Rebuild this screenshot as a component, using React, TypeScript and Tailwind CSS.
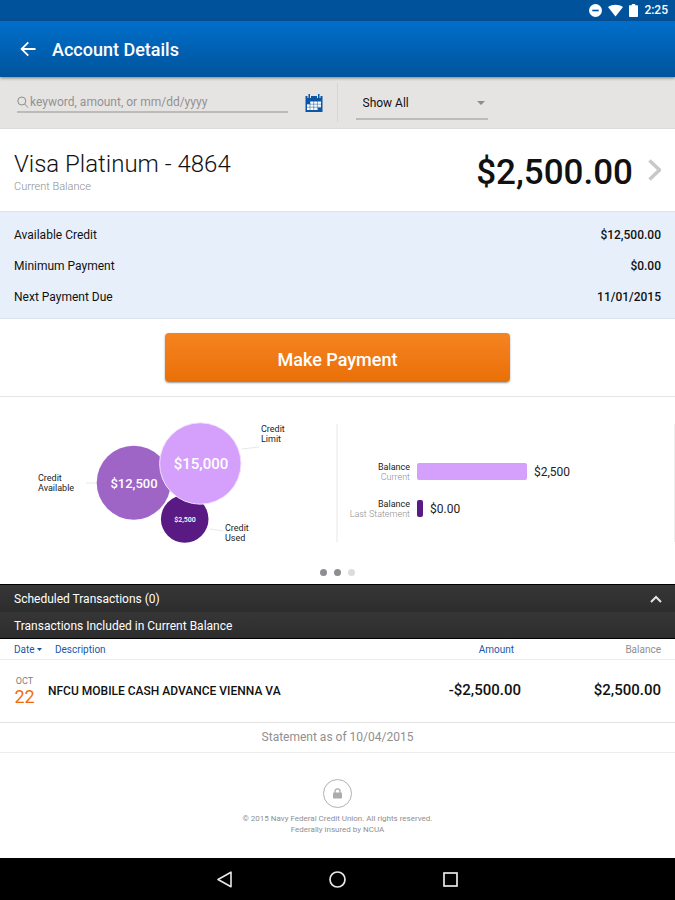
import type { ReactNode } from 'react';

const details = [
  { label: 'Available Credit', value: '$12,500.00' },
  { label: 'Minimum Payment', value: '$0.00' },
  { label: 'Next Payment Due', value: '11/01/2015' },
];

function StatusBar() {
  return (
    <div className="flex h-[21px] items-center justify-end bg-[#00529b] pr-[7px] text-white">
      <svg className="mr-[6px] h-[13px] w-[13px]" viewBox="0 0 13 13">
        <circle cx="6.5" cy="6.5" r="6.5" fill="#fff" />
        <rect x="3.3" y="5.7" width="6.4" height="1.6" fill="#00529b" />
      </svg>
      <svg className="mr-[6px] h-[13px] w-[15px]" viewBox="0 0 15 13">
        <path d="M0 3C4.500 0 10.500 0 15 3L7.500 12.500Z" fill="#fff" />
      </svg>
      <svg className="mr-[6px] h-[13px] w-[9px]" viewBox="0 0 9 13">
        <path d="M2.800 0h3.400v1.300H8.200Q9 1.300 9 2.100V12.200Q9 13 8.200 13H.8Q0 13 0 12.200V2.100Q0 1.300.8 1.300h2z" fill="#fff" />
      </svg>
      <span className="text-[12px] leading-[21px] font-medium">2:25</span>
    </div>
  );
}

function Header() {
  return (
    <header className="relative z-10 flex h-[56px] items-center bg-linear-to-b from-[#006fcb] to-[#00549c] pl-[20px] text-white shadow-[0_1px_3px_rgba(60,50,40,0.6)]">
      <button aria-label="Back" className="mr-[16px]">
        <svg className="h-[16px] w-[16px]" viewBox="0 0 16 16" fill="none" stroke="#fff" strokeWidth="1.8">
          <path d="M15.500 8H2.200M8.300 1.300L1.600 8l6.700 6.700" />
        </svg>
      </button>
      <h1 className="pt-[2px] text-[18px] leading-[24px] font-medium">Account Details</h1>
    </header>
  );
}

function CalendarIcon() {
  return (
    <svg className="h-[18px] w-[18px]" viewBox="0 0 18 18">
      <path d="M.5 2h17v16H.5z" fill="#0d55a5" />
      <path d="M2.500 0h3.500v4H2.500zM12 0h3.500v4H12z" fill="#e6e4e2" />
      <path d="M3.500 0h1.500v4H3.500zM13 0h1.500v4H13z" fill="#0d55a5" />
      <path d="M5 7.500h11v6h-3V16H2v-6h3z" fill="#fff" />
      <path d="M2 10.200h14M2 13.200h14M5 7v9M8.700 7v9M12.400 7v9" stroke="#0d55a5" strokeWidth=".5" />
    </svg>
  );
}

function Filters() {
  return (
    <div className="flex h-[52px] border-b border-[#dcdbda] bg-[#e6e4e2]">
      <div className="flex flex-1 items-center pl-[17px]">
        <label className="flex h-[21px] flex-1 items-center gap-px border-b-2 border-[#bdbbba]">
          <svg className="h-[12px] w-[12px]" viewBox="0 0 12 12" fill="none" stroke="#8d8d8f" strokeWidth="1">
            <circle cx="4.800" cy="5" r="4" />
            <path d="M7.700 8l3.300 3.500" />
          </svg>
          <input
            type="text"
            aria-label="Search transactions"
            placeholder="keyword, amount, or mm/dd/yyyy"
            className="min-w-0 flex-1 bg-transparent text-[12px] leading-[18px] outline-none placeholder:text-[#929294]"
          />
        </label>
        <button aria-label="Pick a date" className="mr-[14px] ml-[17px]">
          <CalendarIcon />
        </button>
      </div>
      <div className="my-[6px] flex flex-1 items-start border-l border-[#d8d6d5] pt-[4px] pl-[18px]">
        <div className="flex h-[33px] w-[132px] items-center border-b-2 border-[#bdbbba] pr-[3px] pl-[7px]">
          <select aria-label="Show" className="flex-1 appearance-none bg-transparent text-[12px] leading-[18px] text-[#111] outline-none">
            <option>Show All</option>
          </select>
          <svg className="h-[4px] w-[8px]" viewBox="0 0 8 4">
            <path d="M0 0h8L4 4z" fill="#8c8c8c" />
          </svg>
        </div>
      </div>
    </div>
  );
}

function Summary() {
  return (
    <section className="flex h-[82px] items-center justify-between px-[14px]">
      <div className="pt-[6px]">
        <h2 className="text-[24px] leading-[28px] font-light text-[#111]">Visa Platinum - 4864</h2>
        <p className="text-[11px] leading-[18px] font-light text-[#8f8f8f]">Current Balance</p>
      </div>
      <button className="flex items-center gap-[14px]">
        <span className="pt-[6px] text-[35px] leading-[44px] font-medium text-[#111]">$2,500.00</span>
        <svg className="h-[22px] w-[14px]" viewBox="0 0 14 22" fill="none" stroke="#c8c8c8" strokeWidth="3.500">
          <path d="M2.500 1.500l10 9.500-10 9.500" />
        </svg>
      </button>
    </section>
  );
}

function Details() {
  return (
    <dl className="border-y border-[#dbe3ec] bg-[#e7f0fa] px-[14px] pt-[7px] pb-[6px] text-[12px] text-[#111]">
      {details.map((d) => (
        <div key={d.label} className="flex h-[31px] items-center justify-between">
          <dt>{d.label}</dt>
          <dd className="font-medium">{d.value}</dd>
        </div>
      ))}
    </dl>
  );
}

function CreditBubbles() {
  return (
    <svg className="mx-auto h-[132px] w-[336px]" viewBox="0 0 336 132">
      <g stroke="#e8e8e8">
        <path d="M86 66h11M242 32l17-2M210 112l13 2" />
      </g>
      <circle cx="133.700" cy="65.700" r="37" fill="#9e65c6" />
      <circle cx="184.700" cy="102" r="23.800" fill="#591b83" />
      <circle cx="200.300" cy="46.500" r="40.700" fill="#d5a0fc" stroke="#f1e3fb" />
      <g fill="#fff" textAnchor="middle" className="font-medium">
        <text x="134" y="71" className="text-[13px]">$12,500</text>
        <text x="201" y="52" className="text-[15px]">$15,000</text>
        <text x="185" y="105" className="text-[7px]">$2,500</text>
      </g>
      <g fill="#222" className="text-[9px]">
        <text x="38" y="64">Credit</text>
        <text x="38" y="74">Available</text>
        <text x="261" y="15">Credit</text>
        <text x="261" y="25">Limit</text>
        <text x="225" y="114">Credit</text>
        <text x="225" y="124">Used</text>
      </g>
    </svg>
  );
}

function BalanceBar({ caption, value, children }: { caption: string; value: string; children: ReactNode }) {
  return (
    <div className="flex items-center">
      <div className="w-[72px] text-right text-[9px] leading-[10px]">
        <div className="text-[#222]">Balance</div>
        <div className="font-light text-[#8f8f8f]">{caption}</div>
      </div>
      <div className="mx-[7px]">{children}</div>
      <span className="text-[12px] leading-[16px] text-[#222]">{value}</span>
    </div>
  );
}

function Charts() {
  return (
    <section className="border-t border-[#e6e6e6]">
      <div className="flex items-center pt-[20px]">
        <div className="flex-1">
          <CreditBubbles />
        </div>
        <div className="h-[118px] w-[2px] bg-[#f3f3f3]" />
        <div className="flex flex-1 flex-col gap-[17px] pt-[14px]">
          <BalanceBar caption="Current" value="$2,500">
            <div className="h-[17px] w-[110px] rounded-[2px] bg-[#d5a0fc]" />
          </BalanceBar>
          <BalanceBar caption="Last Statement" value="$0.00">
            <div className="h-[17px] w-[6px] rounded-[2px] bg-[#591b83]" />
          </BalanceBar>
        </div>
        <div className="h-[118px] w-px bg-[#ededed]" />
      </div>
      <div className="flex justify-center gap-[7px] pt-[20px] pb-[8px]">
        <span className="h-[7px] w-[7px] rounded-full bg-[#8e8e92]" />
        <span className="h-[7px] w-[7px] rounded-full bg-[#8e8e92]" />
        <span className="h-[7px] w-[7px] rounded-full bg-[#dcdcdc]" />
      </div>
    </section>
  );
}

function Transactions() {
  return (
    <section>
      <div className="border-y border-black text-[12px] text-white">
        <button className="flex h-[27px] w-full items-center justify-between bg-linear-to-b from-[#363636] to-[#2d2d2d] pr-[13px] pl-[14px]">
          <span>Scheduled Transactions (0)</span>
          <svg className="h-[8px] w-[12px]" viewBox="0 0 12 8" fill="none" stroke="#e4e4e4" strokeWidth="2">
            <path d="M1 7l5-5 5 5" />
          </svg>
        </button>
        <h3 className="flex h-[26px] items-center bg-linear-to-b from-[#363636] to-[#2d2d2d] px-[14px] pt-[2px]">
          Transactions Included in Current Balance
        </h3>
      </div>
      <table className="w-full table-fixed text-[#111]">
        <colgroup>
          <col className="w-[48px]" />
          <col />
          <col className="w-[120px]" />
          <col className="w-[154px]" />
        </colgroup>
        <thead>
          <tr className="h-[20px] border-b border-[#ececec] text-[10px] leading-[16px] text-[#1c56a8]">
            <th className="pt-[2px] pl-[14px] text-left font-normal">
              <button className="flex items-center gap-[2px]">
                Date
                <svg className="h-[3px] w-[5px]" viewBox="0 0 5 3">
                  <path d="M0 0h5L2.500 3z" fill="#1c56a8" />
                </svg>
              </button>
            </th>
            <th className="pt-[2px] pl-[7px] text-left font-normal">
              <button>Description</button>
            </th>
            <th className="pt-[2px] pr-[7px] text-right font-normal">
              <button>Amount</button>
            </th>
            <th className="pt-[2px] pr-[14px] text-right font-normal text-[#8f8f8f]">Balance</th>
          </tr>
        </thead>
        <tbody>
          <tr className="h-[63px] border-b border-[#e3e3e3]">
            <td className="pl-[14px]">
              <div className="w-[21px] text-center">
                <div className="text-[9px] leading-[12px] text-[#808080]">OCT</div>
                <div className="text-[18px] leading-[20px] text-[#f26c0d]">22</div>
              </div>
            </td>
            <td className="text-[12px] font-medium">NFCU MOBILE CASH ADVANCE VIENNA VA</td>
            <td className="text-right text-[15px] font-medium">-$2,500.00</td>
            <td className="pr-[14px] text-right text-[15px] font-medium">$2,500.00</td>
          </tr>
        </tbody>
      </table>
      <p className="border-b border-[#ececec] text-center text-[12px] leading-[29px] text-[#8f8f8f]">
        Statement as of 10/04/2015
      </p>
    </section>
  );
}

function Footer() {
  return (
    <footer className="flex flex-col items-center pt-[26px] pb-[23px] text-center text-[8px] leading-[11px] text-[#8f8f8f]">
      <div className="mb-[5px] flex h-[29px] w-[29px] items-center justify-center rounded-full border border-[#b0b0b0]">
        <svg className="h-[11px] w-[9px]" viewBox="0 0 9 11">
          <path d="M2 5V3a2.500 2.200 0 0 1 5 0v2" fill="none" stroke="#acacac" strokeWidth="1.300" />
          <rect y="4.500" width="9" height="6" rx=".8" fill="#acacac" />
        </svg>
      </div>
      <p>© 2015 Navy Federal Credit Union. All rights reserved.</p>
      <p>Federally insured by NCUA</p>
    </footer>
  );
}

function NavBar() {
  return (
    <nav className="flex h-[42px] items-center justify-center gap-[96px] bg-black">
      <button aria-label="Back">
        <svg className="h-[17px] w-[17px]" viewBox="0 0 17 17" fill="none" stroke="#e8e8e8" strokeWidth="1.600" strokeLinejoin="round">
          <path d="M15 1.200v14.600L2 8.500z" />
        </svg>
      </button>
      <button aria-label="Home">
        <svg className="h-[17px] w-[17px]" viewBox="0 0 17 17" fill="none" stroke="#e8e8e8" strokeWidth="1.700">
          <circle cx="8.500" cy="8.500" r="7.500" />
        </svg>
      </button>
      <button aria-label="Recent apps">
        <svg className="h-[17px] w-[17px]" viewBox="0 0 17 17" fill="none" stroke="#e8e8e8" strokeWidth="1.700">
          <rect x="2" y="2" width="13" height="13" />
        </svg>
      </button>
    </nav>
  );
}

export default function App() {
  return (
    <div className="flex min-h-screen flex-col bg-white font-['Roboto',sans-serif]">
      <StatusBar />
      <Header />
      <main className="flex-1">
        <Filters />
        <Summary />
        <Details />
        <div className="flex justify-center pt-[14px] pb-[14px]">
          <button className="h-[49px] w-[51%] rounded-[4px] bg-linear-to-b from-[#f5841f] to-[#ea6f06] pt-[3px] text-[18px] font-medium text-white shadow-[0_1px_2px_rgba(0,0,0,0.4)]">
            Make Payment
          </button>
        </div>
        <Charts />
        <Transactions />
        <Footer />
      </main>
      <NavBar />
    </div>
  );
}
